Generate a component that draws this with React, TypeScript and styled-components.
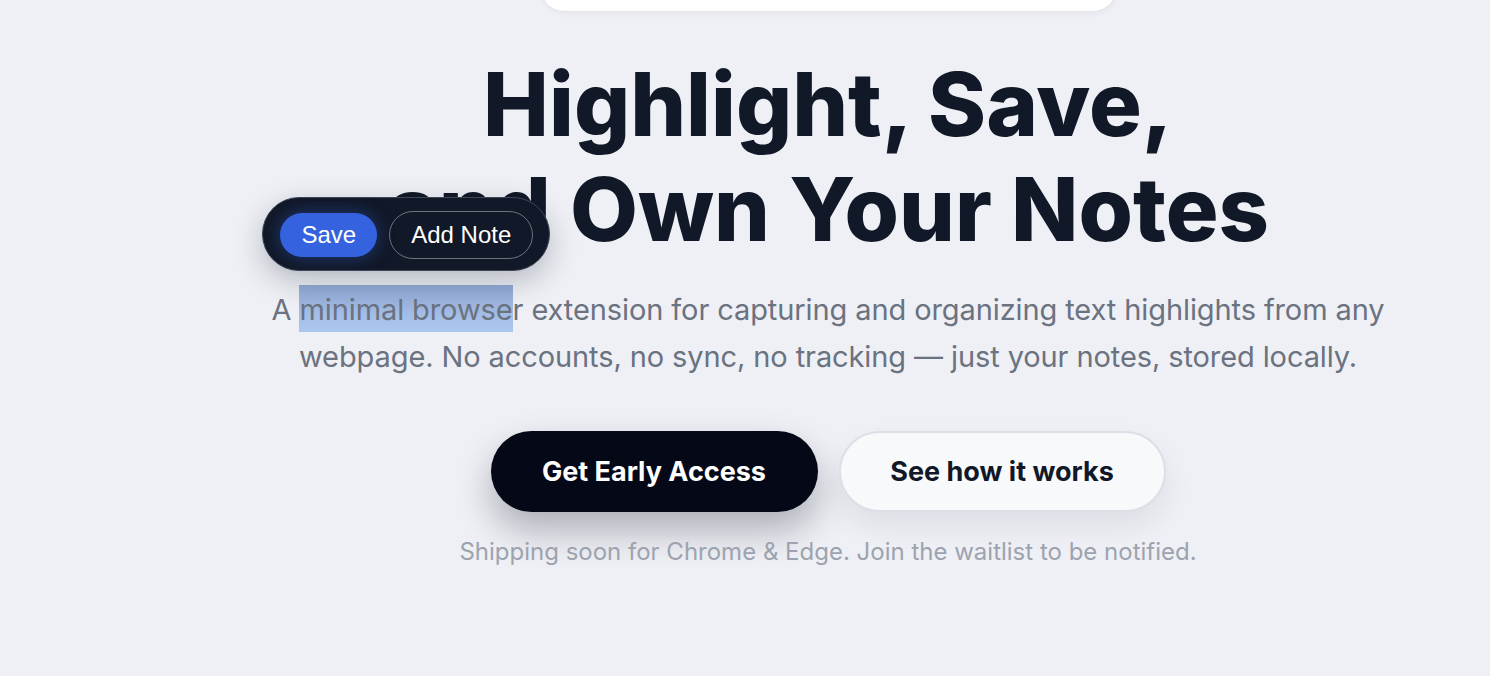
import React from 'react';
import styled, { createGlobalStyle } from 'styled-components';

const GlobalStyle = createGlobalStyle`
  html, body {
    margin: 0;
    padding: 0;
    background: #eef0f5;
    font-family: Inter, "Noto Sans", "Liberation Sans", sans-serif;
    overflow: hidden;
  }
`;

const Page = styled.div`
  width: 1490px;
  height: 676px;
  padding-left: 166px;
  box-sizing: border-box;
  display: flex;
  flex-direction: column;
  align-items: center;
`;

const NavCard = styled.div`
  width: 575px;
  height: 60px;
  margin-top: -50px;
  background: #ffffff;
  border: 1px solid #e2e4ea;
  border-radius: 24px;
  box-shadow: 0 2px 6px rgba(15, 23, 42, 0.04);
`;

const Title = styled.h1`
  margin: 40px 0 0;
  font-size: 88px;
  font-weight: 800;
  line-height: 105px;
  letter-spacing: 0;
  color: #111827;
  text-align: center;
`;

const Lead = styled.p`
  margin: 24px 0 0;
  max-width: 1140px;
  font-size: 29px;
  line-height: 47px;
  letter-spacing: -0.1px;
  color: #6b7280;
  text-align: center;
`;

const Selection = styled.span`
  position: relative;
  background: linear-gradient(180deg, #93aad6 0%, #abc8f0 100%);
  padding: 7px 0 5px;
`;

const Toolbar = styled.span`
  position: absolute;
  left: -37px;
  bottom: calc(100% + 14px);
  z-index: 2;
  display: flex;
  align-items: center;
  gap: 12px;
  padding: 13px 16px 11px 17px;
  background: #111827;
  border: 1.5px solid #3f4656;
  border-radius: 40px;
  box-shadow: 0 10px 30px rgba(15, 23, 42, 0.25);
  white-space: nowrap;
  letter-spacing: 0;
`;

const ToolButton = styled.span<{ $primary?: boolean }>`
  display: inline-flex;
  align-items: center;
  justify-content: center;
  box-sizing: border-box;
  height: ${({ $primary }) => ($primary ? '44px' : '48px')};
  padding: 0 21px;
  border-radius: 24px;
  font-family: "Liberation Sans", Arial, sans-serif;
  font-size: 24px;
  line-height: 1;
  color: #ffffff;
  background: ${({ $primary }) => ($primary ? '#3563e0' : 'transparent')};
  border: ${({ $primary }) => ($primary ? 'none' : '1.5px solid #6b7280')};
  box-shadow: ${({ $primary }) => ($primary ? '0 0 18px rgba(53, 99, 224, 0.45)' : 'none')};
`;

const Actions = styled.div`
  display: flex;
  gap: 21px;
  margin-top: 51px;
`;

const CtaButton = styled.button<{ $dark?: boolean }>`
  width: 327px;
  height: 81px;
  border-radius: 41px;
  font-family: Inter, "Noto Sans", sans-serif;
  font-size: 27px;
  font-weight: 700;
  cursor: pointer;
  color: ${({ $dark }) => ($dark ? '#ffffff' : '#111827')};
  background: ${({ $dark }) => ($dark ? '#050816' : '#f8f9fb')};
  border: ${({ $dark }) => ($dark ? 'none' : '2px solid #dcdfe6')};
  box-shadow: ${({ $dark }) =>
    $dark ? '0 18px 36px rgba(5, 8, 22, 0.28)' : '0 14px 30px rgba(15, 23, 42, 0.08)'};
`;

const Note = styled.p`
  margin: 25px 0 0;
  font-size: 24px;
  color: #9ca3af;
`;

export default function App() {
  return (
    <>
      <GlobalStyle />
      <Page>
        <NavCard />
        <Title>
          Highlight, Save,
          <br />
          and Own Your Notes
        </Title>
        <Lead>
          A{' '}
          <Selection>
            minimal browse
            <Toolbar>
              <ToolButton $primary>Save</ToolButton>
              <ToolButton>Add Note</ToolButton>
            </Toolbar>
          </Selection>
          r extension for capturing and organizing text highlights from any webpage. No
          accounts, no sync, no tracking — just your notes, stored locally.
        </Lead>
        <Actions>
          <CtaButton $dark>Get Early Access</CtaButton>
          <CtaButton>See how it works</CtaButton>
        </Actions>
        <Note>Shipping soon for Chrome &amp; Edge. Join the waitlist to be notified.</Note>
      </Page>
    </>
  );
}
